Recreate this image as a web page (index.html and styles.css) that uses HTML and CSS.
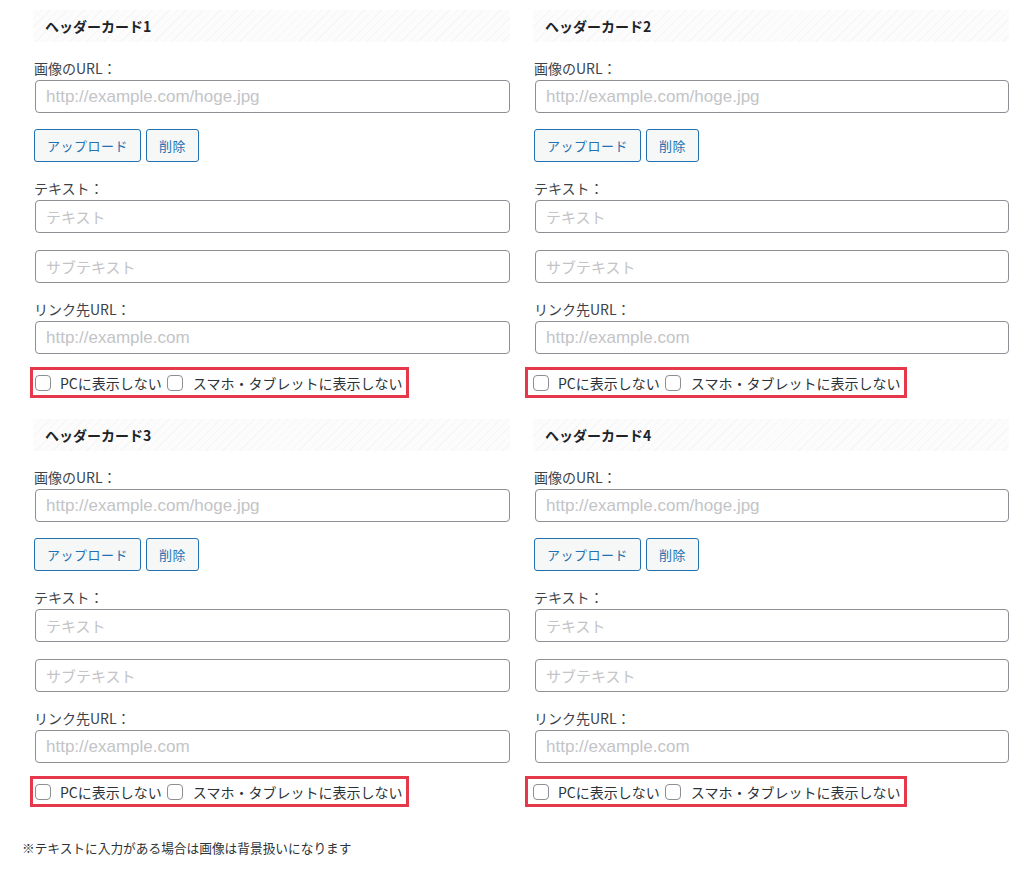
FILE: index.html
```html
<!DOCTYPE html>
<html lang="ja">
<head>
<meta charset="utf-8">
<link rel="stylesheet" href="styles.css">
</head>
<body>
<div class="cards">
  <section class="card">
    <h3 class="card-head">ヘッダーカード1</h3>
    <label class="lbl">画像のURL：</label>
    <input class="inp" type="text" placeholder="http://example.com/hoge.jpg">
    <div class="btns"><button class="btn">アップロード</button><button class="btn">削除</button></div>
    <label class="lbl">テキスト：</label>
    <input class="inp inp-ja" type="text" placeholder="テキスト">
    <input class="inp inp-ja inp-sub" type="text" placeholder="サブテキスト">
    <label class="lbl">リンク先URL：</label>
    <input class="inp" type="text" placeholder="http://example.com">
    <div class="checks">
      <label class="chk"><span class="box"></span>PCに表示しない</label>
      <label class="chk"><span class="box"></span>スマホ・タブレットに表示しない</label>
    </div>
  </section>
  <section class="card card-right">
    <h3 class="card-head">ヘッダーカード2</h3>
    <label class="lbl">画像のURL：</label>
    <input class="inp" type="text" placeholder="http://example.com/hoge.jpg">
    <div class="btns"><button class="btn">アップロード</button><button class="btn">削除</button></div>
    <label class="lbl">テキスト：</label>
    <input class="inp inp-ja" type="text" placeholder="テキスト">
    <input class="inp inp-ja inp-sub" type="text" placeholder="サブテキスト">
    <label class="lbl">リンク先URL：</label>
    <input class="inp" type="text" placeholder="http://example.com">
    <div class="checks">
      <label class="chk"><span class="box"></span>PCに表示しない</label>
      <label class="chk"><span class="box"></span>スマホ・タブレットに表示しない</label>
    </div>
  </section>
  <section class="card">
    <h3 class="card-head">ヘッダーカード3</h3>
    <label class="lbl">画像のURL：</label>
    <input class="inp" type="text" placeholder="http://example.com/hoge.jpg">
    <div class="btns"><button class="btn">アップロード</button><button class="btn">削除</button></div>
    <label class="lbl">テキスト：</label>
    <input class="inp inp-ja" type="text" placeholder="テキスト">
    <input class="inp inp-ja inp-sub" type="text" placeholder="サブテキスト">
    <label class="lbl">リンク先URL：</label>
    <input class="inp" type="text" placeholder="http://example.com">
    <div class="checks">
      <label class="chk"><span class="box"></span>PCに表示しない</label>
      <label class="chk"><span class="box"></span>スマホ・タブレットに表示しない</label>
    </div>
  </section>
  <section class="card card-right">
    <h3 class="card-head">ヘッダーカード4</h3>
    <label class="lbl">画像のURL：</label>
    <input class="inp" type="text" placeholder="http://example.com/hoge.jpg">
    <div class="btns"><button class="btn">アップロード</button><button class="btn">削除</button></div>
    <label class="lbl">テキスト：</label>
    <input class="inp inp-ja" type="text" placeholder="テキスト">
    <input class="inp inp-ja inp-sub" type="text" placeholder="サブテキスト">
    <label class="lbl">リンク先URL：</label>
    <input class="inp" type="text" placeholder="http://example.com">
    <div class="checks">
      <label class="chk"><span class="box"></span>PCに表示しない</label>
      <label class="chk"><span class="box"></span>スマホ・タブレットに表示しない</label>
    </div>
  </section>
</div>
<p class="note">※テキストに入力がある場合は画像は背景扱いになります</p>
</body>
</html>
```
FILE: styles.css
```css
html, body {
  margin: 0;
  padding: 0;
  background: #ffffff;
}
body {
  font-family: "Noto Sans CJK JP", "Liberation Sans", sans-serif;
  color: #2c3338;
}
.cards {
  display: grid;
  grid-template-columns: 477px 476px;
  column-gap: 23px;
  padding: 10px 0 0 33px;
  row-gap: 21px;
}
.card {
  display: flex;
  flex-direction: column;
  align-items: flex-start;
}
.card-head {
  align-self: stretch;
  margin: 0;
  height: 32px;
  box-sizing: border-box;
  padding: 0 0 0 12px;
  display: flex;
  align-items: center;
  font-size: 14px;
  font-weight: 700;
  color: #1d2327;
  background-color: #fbfbfb;
  background-image: repeating-linear-gradient(135deg, #f6f6f6 0 1px, #fcfcfc 1px 6px);
}
.lbl {
  display: block;
  margin: 16px 0 0 1px;
  font-size: 14px;
  line-height: 20px;
  color: #3c434a;
}
.inp {
  box-sizing: border-box;
  align-self: stretch;
  margin: 2px 0 0 2px;
  height: 33px;
  border: 1px solid #8c8f94;
  border-radius: 4px;
  padding: 0 10px;
  font-family: "Liberation Sans", "Noto Sans CJK JP", sans-serif;
  font-size: 17px;
  color: #2c3338;
  background: #fff;
  outline: none;
}
.inp-ja {
  font-family: "Noto Sans CJK JP", sans-serif;
  font-size: 15px;
}
.inp::placeholder {
  color: #c3c4c7;
}
.inp-sub {
  margin-top: 17px;
}
.btns {
  display: flex;
  gap: 5px;
  margin: 16px 0 0 1px;
}
.btn {
  box-sizing: border-box;
  height: 33px;
  padding: 0 12px;
  border: 1px solid #2271b1;
  border-radius: 3px;
  background: #f6f7f7;
  color: #2271b1;
  font-family: "Noto Sans CJK JP", sans-serif;
  font-size: 13px;
  letter-spacing: 0.5px;
}
.lbl + .inp {
  margin-top: 2px;
}
.checks {
  display: flex;
  align-items: center;
  margin: 13px 0 0 -3px;
  border: 3px solid #e5394b;
  height: 31px;
  box-sizing: border-box;
  padding: 0 4px 0 2px;
}
.card-right .checks {
  margin-left: -8px;
  padding-left: 5px;
}
.chk {
  display: flex;
  align-items: center;
  font-size: 14px;
  color: #2c3338;
  margin-right: 5px;
}
.chk:last-child {
  margin-right: 0;
}
.box {
  display: inline-block;
  width: 16px;
  height: 16px;
  box-sizing: border-box;
  border: 1px solid #8c8f94;
  border-radius: 4px;
  background: #fff;
  margin-right: 9px;
}
.chk + .chk .box {
  margin-right: 10px;
}
.note {
  margin: 31px 0 0 22px;
  font-size: 12.7px;
  color: #2c3338;
}
```
